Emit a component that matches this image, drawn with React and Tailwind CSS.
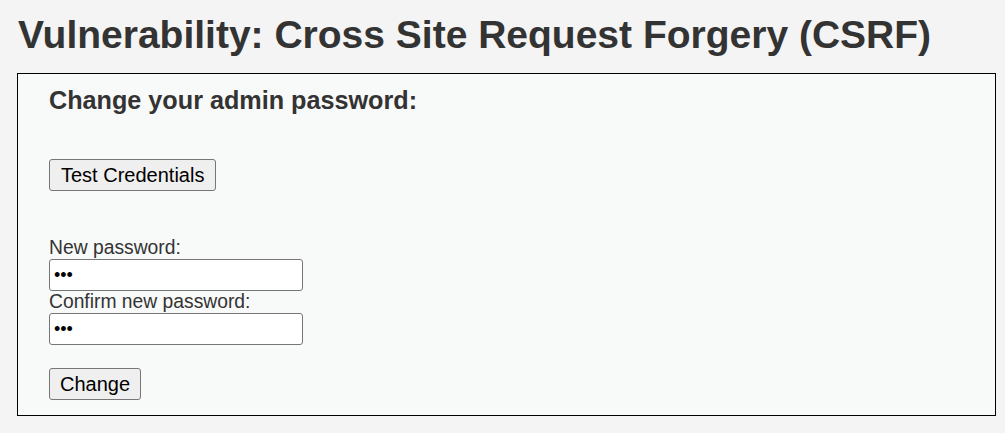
import React from "react";

const App = () => {
  return (
    <div className="min-h-screen bg-[#f4f4f4] text-[#333] font-['Liberation_Sans',Arial,sans-serif]">
      <div className="pl-[17px] pr-[9px] pt-[10px] pb-[18px]">
        <h1 className="pl-px text-[39px] font-bold leading-[50px] text-[#333]">
          Vulnerability: Cross Site Request Forgery (CSRF)
        </h1>

        <div className="mt-[13px] border border-black bg-[#f8f9f9] pl-[31px] pt-[11px] pb-[15px]">
          <h3 className="text-[25.2px] font-bold leading-[30px] text-[#333]">
            Change your admin password:
          </h3>

          <button className="mt-[44px] h-[32px] rounded-[3px] border border-[#767676] bg-[#efefef] px-[11px] text-[20px] text-black">
            Test Credentials
          </button>

          <form className="mt-[46px] flex flex-col items-start text-[19.3px] leading-[22px] text-[#333]">
            <label>New password:</label>
            <input
              type="password"
              defaultValue="abc"
              className="h-[32px] w-[254px] rounded-[3px] border border-[#767676] bg-white px-[4px] text-[18px] text-black"
            />
            <label>Confirm new password:</label>
            <input
              type="password"
              defaultValue="abc"
              className="h-[32px] w-[254px] rounded-[3px] border border-[#767676] bg-white px-[4px] text-[18px] text-black"
            />
            <button
              type="button"
              className="mt-[23px] h-[32px] rounded-[3px] border border-[#767676] bg-[#efefef] px-[10px] text-[20px] text-black"
            >
              Change
            </button>
          </form>
        </div>
      </div>
    </div>
  );
};

export default App;
